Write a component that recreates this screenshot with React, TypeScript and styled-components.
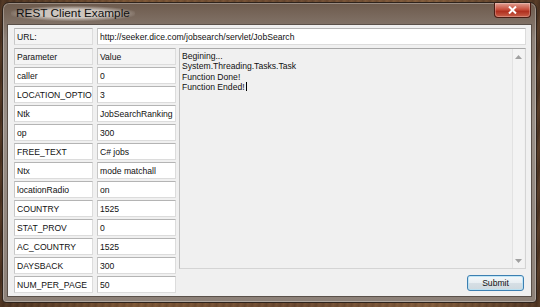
import styled, { createGlobalStyle } from 'styled-components';

const params: [string, string][] = [
	['caller', '0'],
	['LOCATION_OPTIO', '3'],
	['Ntk', 'JobSearchRanking'],
	['op', '300'],
	['FREE_TEXT', 'C# jobs'],
	['Ntx', 'mode matchall'],
	['locationRadio', 'on'],
	['COUNTRY', '1525'],
	['STAT_PROV', '0'],
	['AC_COUNTRY', '1525'],
	['DAYSBACK', '300'],
	['NUM_PER_PAGE', '50'],
];

const outputLines = [
	'Begining...',
	'System.Threading.Tasks.Task',
	'Function Done!',
];

const GlobalStyle = createGlobalStyle`
	* { box-sizing: border-box; }
	html, body { margin: 0; padding: 0; }
	body {
		width: 540px;
		height: 307px;
		overflow: hidden;
		font-family: 'Liberation Sans', Arial, sans-serif;
	}
`;

const App = () => {
	return (
		<>
			<GlobalStyle />
			<Desktop>
				<Window>
					<TitleBar>
						<Title>REST Client Example</Title>
						<CloseButton>
							<svg width='9' height='8' viewBox='0 0 9 8'>
								<path
									d='M1 0.5 L8 7.5 M8 0.5 L1 7.5'
									stroke='#fff'
									strokeWidth='2'
								/>
							</svg>
						</CloseButton>
					</TitleBar>
					<Client>
						<UrlRow>
							<TextBox readOnlyLook>URL:</TextBox>
							<TextBox>
								http://seeker.dice.com/jobsearch/servlet/JobSearch
							</TextBox>
						</UrlRow>
						<Body>
							<ParamGrid>
								<TextBox readOnlyLook>Parameter</TextBox>
								<TextBox readOnlyLook>Value</TextBox>
								{params.map(([k, v]) => (
									<Pair key={k}>
										<TextBox>{k}</TextBox>
										<TextBox>{v}</TextBox>
									</Pair>
								))}
							</ParamGrid>
							<RightPane>
								<Output>
									<OutputText>
										{outputLines.map(l => (
											<div key={l}>{l}</div>
										))}
										<div>
											Function Ended!
											<Caret />
										</div>
									</OutputText>
									<ScrollBar>
										<svg width='7' height='4' viewBox='0 0 7 4'>
											<path d='M0 4 L3.5 0 L7 4 Z' fill='#a0a0a0' />
										</svg>
										<svg width='7' height='4' viewBox='0 0 7 4'>
											<path d='M0 0 L3.5 4 L7 0 Z' fill='#a0a0a0' />
										</svg>
									</ScrollBar>
								</Output>
								<SubmitButton>Submit</SubmitButton>
							</RightPane>
						</Body>
					</Client>
				</Window>
			</Desktop>
		</>
	);
};

const Desktop = styled.div`
	width: 540px;
	height: 307px;
	padding: 2px 3px 4px 2px;
	background:
		repeating-linear-gradient(
			100deg,
			rgba(0, 0, 0, 0.08) 0px,
			rgba(255, 200, 140, 0.06) 3px,
			rgba(0, 0, 0, 0.05) 7px
		),
		linear-gradient(90deg, #4a3120, #7a5434 25%, #6a4830 55%, #805a3a 80%, #4e3422);
`;

const Window = styled.div`
	height: 100%;
	display: flex;
	flex-direction: column;
	border: 1px solid #2e231c;
	border-radius: 7px 7px 4px 4px;
	padding: 0 4px 5px 4px;
	background: linear-gradient(
		180deg,
		#6d5a4c 0%,
		#8e8279 12%,
		#9a9088 40%,
		#8d8178 100%
	);
	box-shadow: inset 0 0 0 1px rgba(255, 255, 255, 0.3);
`;

const TitleBar = styled.div`
	height: 21px;
	display: flex;
	align-items: flex-start;
	padding-left: 4px;
	flex-shrink: 0;
`;

const Title = styled.div`
	margin-top: 3px;
	padding: 0 5px;
	font-size: 11.8px;
	line-height: 15px;
	color: #111;
	border-radius: 8px;
	background: radial-gradient(
		ellipse at center,
		rgba(220, 214, 208, 0.85) 40%,
		rgba(220, 214, 208, 0) 75%
	);
`;

const CloseButton = styled.div`
	margin-left: auto;
	margin-right: 1px;
	width: 37px;
	height: 15px;
	display: flex;
	align-items: center;
	justify-content: center;
	border: 1px solid #4a1d14;
	border-top: none;
	border-radius: 0 0 4px 4px;
	background: linear-gradient(180deg, #e0a092 0%, #c8513f 45%, #b0301f 60%, #c9604a 100%);
	box-shadow: inset 0 0 0 1px rgba(255, 255, 255, 0.25);
`;

const Client = styled.div`
	flex: 1;
	display: flex;
	flex-direction: column;
	gap: 3px;
	padding: 3px 5px 0 6px;
	background: #f0f0f0;
	border: 1px solid #5a5049;
	font-size: 8.6px;
	color: #111;
`;

const UrlRow = styled.div`
	display: grid;
	grid-template-columns: 79px 1fr;
	column-gap: 4px;
	height: 17px;
`;

const TextBox = styled.div<{ readOnlyLook?: boolean }>`
	height: 17px;
	display: flex;
	align-items: center;
	padding: 0 2px;
	white-space: nowrap;
	overflow: hidden;
	background: ${props => (props.readOnlyLook ? '#f4f4f4' : '#ffffff')};
	border: 1px solid #dcdcdc;
	border-top-color: #b4b4b4;
	border-left-color: #c8c8c8;
`;

const Body = styled.div`
	display: flex;
	gap: 3px;
	height: 245px;
`;

const ParamGrid = styled.div`
	display: grid;
	grid-template-columns: 79px 79px;
	grid-auto-rows: 17px;
	column-gap: 4px;
	row-gap: 2px;
	align-content: start;
`;

const Pair = styled.div`
	display: contents;
`;

const RightPane = styled.div`
	flex: 1;
	display: flex;
	flex-direction: column;
	align-items: flex-end;
	justify-content: space-between;
`;

const Output = styled.div`
	width: 100%;
	height: 221px;
	display: flex;
	background: #f0f0f0;
	border: 1px solid #d4d4d4;
	border-top-color: #a8a8a8;
	border-left-color: #c0c0c0;
`;

const OutputText = styled.div`
	flex: 1;
	padding: 2px 2px;
	line-height: 10.3px;
`;

const Caret = styled.span`
	display: inline-block;
	width: 1px;
	height: 9px;
	margin-left: 1px;
	vertical-align: -1px;
	background: #000;
`;

const ScrollBar = styled.div`
	width: 12px;
	display: flex;
	flex-direction: column;
	align-items: center;
	justify-content: space-between;
	padding: 6px 0 5px;
	margin: 0 1px 0 0;
	border-left: 1px solid #e2e2e2;
	background: #f3f3f3;
`;

const SubmitButton = styled.div`
	width: 57px;
	height: 16px;
	margin-right: 2px;
	margin-bottom: 2px;
	display: flex;
	align-items: center;
	justify-content: center;
	border: 1px solid #3c7fb1;
	border-radius: 3px;
	background: linear-gradient(180deg, #f4f8fb 0%, #e8eef2 48%, #d6dfe5 52%, #cfd9df 100%);
	box-shadow: inset 0 0 0 1px rgba(180, 225, 245, 0.8);
`;

export default App;
